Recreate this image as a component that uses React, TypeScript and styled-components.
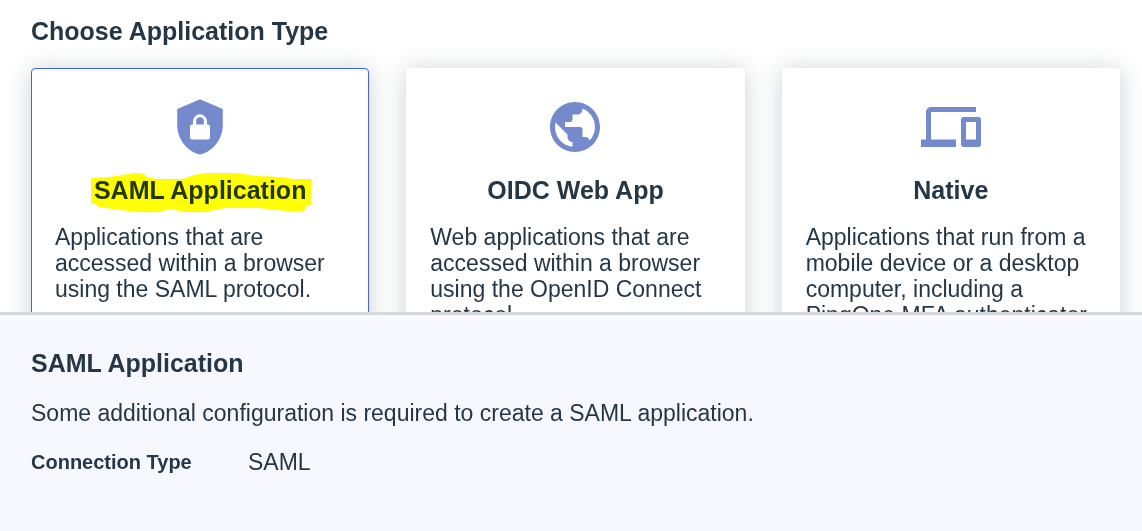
import React, { useState } from "react";
import styled, { createGlobalStyle } from "styled-components";

const GlobalStyle = createGlobalStyle`
  *, *::before, *::after { box-sizing: border-box; }
  body {
    margin: 0;
    background: #ffffff;
    color: #253746;
    font-family: "Liberation Sans", Arial, sans-serif;
    font-size: 23px;
    line-height: 26px;
  }
`;

const Page = styled.main`
  display: flex;
  flex-direction: column;
  height: 100vh;
`;

const TypePicker = styled.section`
  flex: 1;
  min-height: 0;
  overflow: hidden;
  padding: 16px 22px 0 31px;
`;

const Heading = styled.h2`
  margin: 0;
  font-size: 25px;
  line-height: 30px;
  font-weight: 700;
`;

const CardGrid = styled.div`
  display: grid;
  grid-template-columns: repeat(3, 1fr);
  gap: 37px;
  margin-top: 22px;
`;

const Card = styled.button<{ $selected: boolean }>`
  display: flex;
  flex-direction: column;
  align-items: center;
  justify-content: flex-start;
  min-height: 320px;
  padding: 28px 23px;
  border: 1px solid ${({ $selected }) => ($selected ? "#4462ed" : "#ffffff")};
  border-radius: 4px;
  background: #ffffff;
  box-shadow: 0 2px 24px rgba(37, 55, 70, 0.24);
  color: inherit;
  font: inherit;
  text-align: left;
  cursor: pointer;
`;

const CardIcon = styled.svg`
  width: 60px;
  height: 60px;
  fill: #748acc;
`;

const CardTitle = styled.span`
  position: relative;
  margin-top: 18px;
  font-size: 25px;
  line-height: 30px;
  font-weight: 700;
`;

const Marker = styled.svg`
  position: absolute;
  top: -2px;
  left: 50%;
  width: 222px;
  height: 41px;
  transform: translateX(-50%);
  fill: #ffff00;
  mix-blend-mode: multiply;
  pointer-events: none;
`;

const CardText = styled.span`
  align-self: stretch;
  margin-top: 19px;
`;

const Details = styled.section`
  padding: 33px 31px 56px;
  border-top: 3px solid #d5d6d9;
  background: #f7f8fd;
`;

const Summary = styled.p`
  margin: 22px 0 0;
`;

const Properties = styled.dl`
  display: grid;
  grid-template-columns: 217px 1fr;
  margin: 23px 0 0;
`;

const Term = styled.dt`
  font-size: 20px;
  font-weight: 700;
`;

const Value = styled.dd`
  margin: 0;
`;

const ShieldIcon = () => (
  <CardIcon viewBox="0 0 60 60" aria-hidden="true">
    <path d="M30 2.300 7.200 12v16c0 14 10 27 22.800 29.500C42.800 55 52.800 42 52.800 28V12z" />
    <path
      fill="#ffffff"
      d="M22 27.500h1V24.500a7 7.200 0 0 1 14 0v3h1a2 2 0 0 1 2 2V40a2.500 2.500 0 0 1-2.500 2.500h-15A2.500 2.500 0 0 1 20 40V29.500a2 2 0 0 1 2-2zm4.200 0h7.600V24a3.800 3.800 0 0 0-7.600 0z"
    />
  </CardIcon>
);

const GlobeIcon = () => (
  <CardIcon viewBox="0 0 24 24" aria-hidden="true">
    <path d="M12 2C6.480 2 2 6.480 2 12s4.480 10 10 10 10-4.480 10-10S17.520 2 12 2zm-1 17.930c-3.950-.49-7-3.850-7-7.930 0-.62.080-1.210.210-1.790L9 15v1c0 1.100.9 2 2 2v1.930zm6.900-2.540c-.26-.81-1-1.390-1.900-1.390h-1v-3c0-.55-.45-1-1-1H8v-2h2c.55 0 1-.45 1-1V7h2c1.100 0 2-.9 2-2v-.41c2.930 1.190 5 4.060 5 7.410 0 2.080-.8 3.970-2.100 5.390z" />
  </CardIcon>
);

const DevicesIcon = () => (
  <CardIcon viewBox="0 0 24 24" aria-hidden="true">
    <path d="M4 6h18V4H4c-1.100 0-2 .9-2 2v11H0v3h14v-3H4V6zm19 2h-6c-.55 0-1 .45-1 1v10c0 .55.45 1 1 1h6c.55 0 1-.45 1-1V9c0-.55-.45-1-1-1zm-1 9h-4v-7h4v7z" />
  </CardIcon>
);

const types = [
  {
    title: "SAML Application",
    text: "Applications that are accessed within a browser using the SAML protocol.",
    Icon: ShieldIcon,
    marked: true,
  },
  {
    title: "OIDC Web App",
    text: "Web applications that are accessed within a browser using the OpenID Connect protocol.",
    Icon: GlobeIcon,
    marked: false,
  },
  {
    title: "Native",
    text: "Applications that run from a mobile device or a desktop computer, including a PingOne MFA authenticator.",
    Icon: DevicesIcon,
    marked: false,
  },
];

export default function App() {
  const [selected, setSelected] = useState(0);
  return (
    <>
      <GlobalStyle />
      <Page>
        <TypePicker>
          <Heading>Choose Application Type</Heading>
          <CardGrid>
            {types.map(({ title, text, Icon, marked }, index) => (
              <Card
                key={title}
                type="button"
                aria-pressed={selected === index}
                $selected={selected === index}
                onClick={() => setSelected(index)}
              >
                <Icon />
                <CardTitle>
                  {title}
                  {marked && (
                    <Marker viewBox="0 0 222 41" aria-hidden="true">
                      <path d="M2 5 20 4 40 1Q48-1 55 1L58 4 68 6H94L105 2 116 0H147L168 3 192 4 205 6H222V32H218L216 37 209 39 197 38 170 35H136L117 39H96L82 36 69 39H48L24 36 10 34 7 31H2Z" />
                    </Marker>
                  )}
                </CardTitle>
                <CardText>{text}</CardText>
              </Card>
            ))}
          </CardGrid>
        </TypePicker>
        <Details>
          <Heading>SAML Application</Heading>
          <Summary>
            Some additional configuration is required to create a SAML application.
          </Summary>
          <Properties>
            <Term>Connection Type</Term>
            <Value>SAML</Value>
          </Properties>
        </Details>
      </Page>
    </>
  );
}
